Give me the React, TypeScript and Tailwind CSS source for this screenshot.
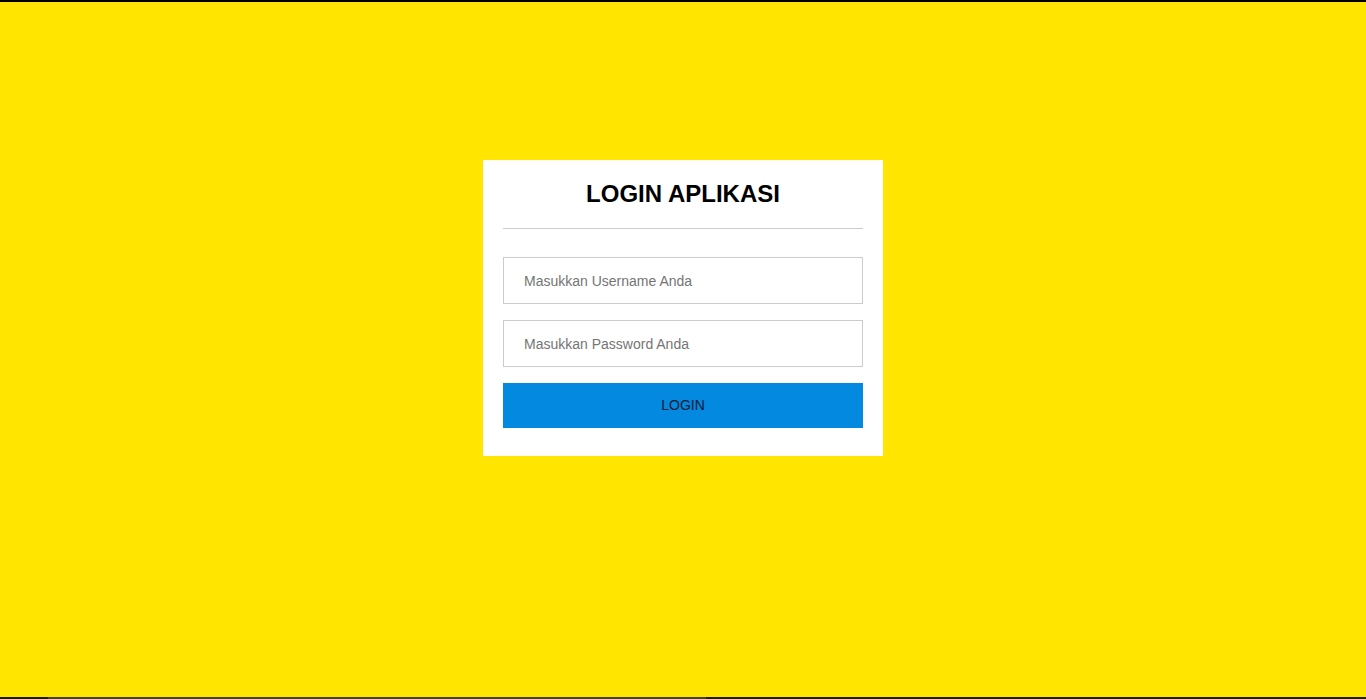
import React, { useState } from 'react';

const App: React.FC = () => {
  const [username, setUsername] = useState('');
  const [password, setPassword] = useState('');

  return (
    <div className="flex flex-col h-[699px] w-full bg-[#ffe500] font-['Liberation_Sans',Arial,sans-serif] overflow-hidden">
      {/* top edge */}
      <div className="h-[2px] bg-black shrink-0" />

      <main className="flex-1 flex justify-center pt-[158px]">
        <div className="w-[400px] h-[296px] bg-white px-5 pt-5 pb-7 flex flex-col">
          <h2 className="text-[24px] leading-[28px] font-bold text-black text-center">LOGIN APLIKASI</h2>
          <hr className="mt-5 border-0 border-t border-[#cccccc]" />

          <form className="mt-[28px] flex flex-col gap-4" onSubmit={(e) => e.preventDefault()}>
            <input
              type="text"
              value={username}
              onChange={(e) => setUsername(e.target.value)}
              placeholder="Masukkan Username Anda"
              className="h-[47px] w-full border border-[#cccccc] px-5 text-[14px] text-[#333] placeholder:text-[#757575] outline-none"
            />
            <input
              type="password"
              value={password}
              onChange={(e) => setPassword(e.target.value)}
              placeholder="Masukkan Password Anda"
              className="h-[47px] w-full border border-[#cccccc] px-5 text-[14px] text-[#333] placeholder:text-[#757575] outline-none"
            />
            <button type="submit" className="h-[45px] w-full bg-[#0389e0] text-[14px] text-[#0d1b33]">
              LOGIN
            </button>
          </form>
        </div>
      </main>

      {/* bottom edge */}
      <div className="h-[2px] flex shrink-0">
        <div className="w-[48px] bg-[#1e1a08]" />
        <div className="flex-1 bg-[#4a4224]" />
        <div className="w-[660px] bg-[#231d08]" />
      </div>
    </div>
  );
};

export default App;
